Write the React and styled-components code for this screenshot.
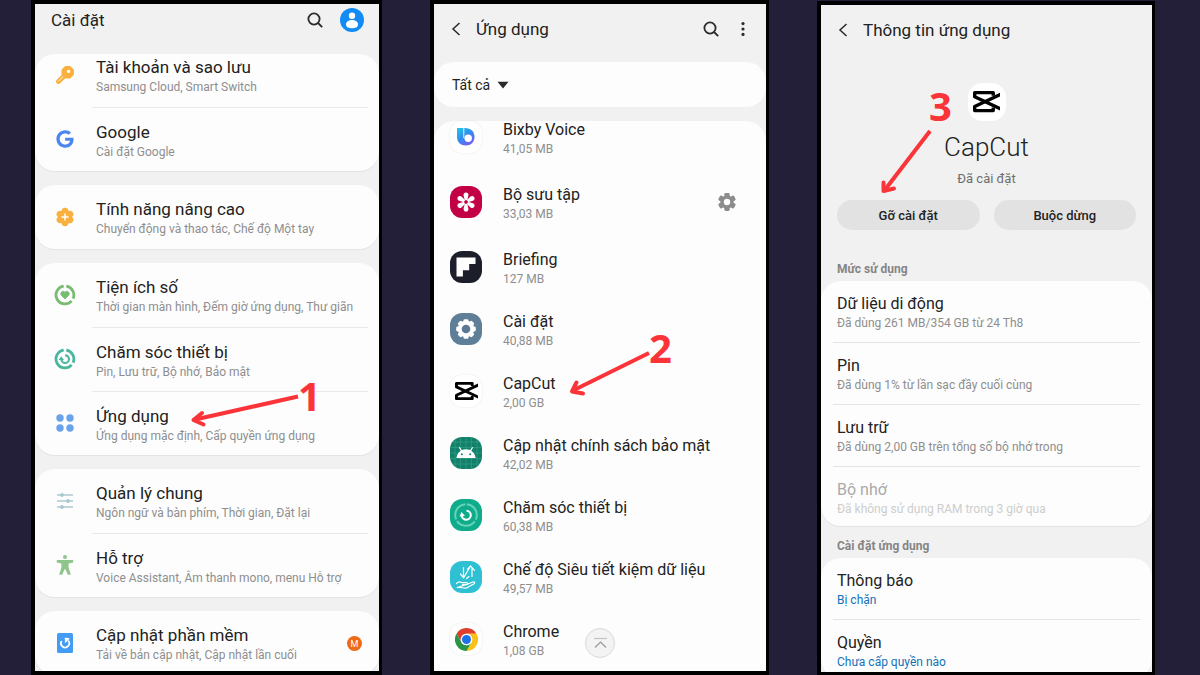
import React from 'react';
import styled, { createGlobalStyle } from 'styled-components';
import { FaGoogle } from 'react-icons/fa';

const GlobalStyle = createGlobalStyle`
    * {
        box-sizing: border-box;
        margin: 0;
        padding: 0;
    }

    body {
        background-color: #241f38;
        color: #222;
        font-family: Roboto, "Noto Sans", sans-serif;
    }

    a {
        color: inherit;
        text-decoration: none;
    }

    ul {
        list-style: none;
    }

    button, select {
        border: none;
        background: none;
        color: inherit;
        font-family: inherit;
        cursor: pointer;
    }

    svg {
        display: block;
        flex-shrink: 0;
    }
`;

const Page = styled.main`
    display: grid;
    grid-template-columns: 351fr 339fr 338fr;
    grid-template-rows: minmax(0, 1fr);
    gap: 48px;
    height: 100vh;
    padding: 0 45px 0 31px;
`;

const Phone = styled.section`
    position: relative;
    display: flex;
    flex-direction: column;
    min-width: 0;
    margin-top: ${({ $drop }) => ($drop ? '1px' : '0')};
    border: 4px solid #000;
    border-right-width: 3px;
    border-bottom-width: ${({ $drop }) => ($drop ? '3px' : '4px')};
    background-color: #f1f1f1;
    overflow: hidden;
`;

const Header = styled.header`
    display: flex;
    align-items: center;
    flex-shrink: 0;
    height: ${({ $compact }) => ($compact ? '50px' : '58px')};
    padding: ${({ $compact }) => ($compact ? '0 15px 18px 16px' : '0 7px 8px 14px')};
`;

const Heading = styled.h1`
    flex: 1;
    font-size: 17px;
    line-height: 24px;
    font-weight: 400;
    white-space: nowrap;
`;

const IconButton = styled.button`
    display: flex;
    align-items: center;
    justify-content: center;
    width: 32px;
    height: 32px;
    flex-shrink: 0;
`;

const BackButton = styled(IconButton)`
    width: 16px;
    margin-right: 12px;
`;

const Avatar = styled.button`
    width: 24px;
    height: 24px;
    margin-left: 9px;
`;

const Card = styled.ul`
    flex-shrink: 0;
    border-radius: 20px;
    background-color: #fdfdfd;
    box-shadow: 0 1px 1px rgba(0, 0, 0, 0.06);
`;

const SettingsGroups = styled.div`
    display: flex;
    flex-direction: column;
    gap: 14px;
`;

const SettingRow = styled.a`
    display: flex;
    align-items: center;
    gap: 15px;
    padding: 0 11px 0 18px;
`;

const IconSlot = styled.span`
    display: flex;
    justify-content: center;
    width: 24px;
    padding-bottom: ${({ $scrolled }) => ($scrolled ? '12px' : '0')};
`;

const SettingBody = styled.span`
    display: flex;
    align-items: center;
    justify-content: space-between;
    flex: 1;
    min-width: 0;
    height: ${({ $scrolled }) => ($scrolled ? '53px' : '64px')};
    padding: ${({ $scrolled }) => ($scrolled ? '0 6px 10px 4px' : '1px 6px 0 4px')};
    border-top: ${({ $divider }) => ($divider ? '1px solid #e9e9e9' : 'none')};
`;

const Texts = styled.span`
    display: flex;
    flex-direction: column;
    white-space: nowrap;
`;

const Title = styled.span`
    font-size: 16px;
    line-height: 22px;
    color: ${({ $disabled }) => ($disabled ? '#a9a9a9' : '#222')};
`;

const SettingTitle = styled(Title)`
    font-size: 17px;
    line-height: 23px;
`;

const Sub = styled.span`
    font-size: 12px;
    line-height: 16px;
    color: ${({ $color }) => $color || '#8e8e8e'};
`;

const Badge = styled.span`
    display: flex;
    align-items: center;
    justify-content: center;
    width: 15px;
    height: 15px;
    border-radius: 50%;
    background-color: #ee6a14;
    color: #fff;
    font-size: 9px;
`;

const FilterBar = styled.div`
    display: flex;
    align-items: center;
    flex-shrink: 0;
    height: 45px;
    margin-bottom: 14px;
    padding-left: 18px;
    border-radius: 20px;
    background-color: #fdfdfd;

    svg {
        margin-left: -18px;
        pointer-events: none;
    }
`;

const Filter = styled.select`
    appearance: none;
    padding-right: 24px;
    font-size: 14px;
    line-height: 22px;
`;

const AppCard = styled(Card)`
    flex: 1 0 0;
    min-height: 0;
    border-radius: 20px 20px 0 0;
`;

const AppScroll = styled.ul`
    margin-top: -15px;
`;

const AppItem = styled.li`
    display: flex;
    align-items: center;
    height: ${({ $tall }) => ($tall ? '68px' : '62px')};
    padding: 0 23px 0 16px;
`;

const AppLink = styled.a`
    display: flex;
    align-items: center;
    gap: 21px;
    flex: 1;

    ${Texts} {
        padding-top: 1px;
    }
`;

const AppIcon = styled.span`
    display: flex;
    align-items: center;
    justify-content: center;
    flex-shrink: 0;
    width: ${({ $size }) => $size || 32}px;
    height: ${({ $size }) => $size || 32}px;
    border-radius: 38%;
    background-color: ${({ $bg }) => $bg || '#fff'};
    box-shadow: ${({ $lifted }) => ($lifted ? '0 0 2px rgba(0, 0, 0, 0.1)' : 'none')};
    overflow: hidden;
`;

const ToTop = styled.button`
    position: absolute;
    left: calc(50% - 15px);
    bottom: 13px;
    display: flex;
    align-items: center;
    justify-content: center;
    width: 30px;
    height: 30px;
    border: 1px solid #d9d9d9;
    border-radius: 50%;
    background-color: #f3f3f3;
`;

const AppSummary = styled.div`
    display: flex;
    flex-direction: column;
    align-items: center;
    flex-shrink: 0;
    padding-top: 20px;
`;

const AppName = styled.h2`
    margin-top: 8px;
    font-size: 26px;
    line-height: 36px;
    font-weight: 300;
`;

const Status = styled.p`
    margin-top: 5px;
    font-size: 13px;
    line-height: 18px;
    color: #6d6d6d;
`;

const Actions = styled.div`
    display: flex;
    flex-shrink: 0;
    gap: 14px;
    padding: 12px 16px 19px;
`;

const Action = styled.button`
    flex: 1;
    height: 30px;
    border-radius: 15px;
    background-color: #e2e2e2;
    font-size: 13px;
    font-weight: 500;
`;

const SectionLabel = styled.h3`
    flex-shrink: 0;
    padding: 12px 16px 4px;
    font-size: 12px;
    line-height: 16px;
    font-weight: 700;
    color: #858585;
`;

const DetailItem = styled.li`
    margin: 0 12px;
    padding: 12px 4px 11px;

    & + & {
        border-top: 1px solid #e4e4e4;
    }

    &:last-child {
        padding-bottom: 9px;
    }
`;

const Arrow = styled.svg`
    position: absolute;
    left: ${({ $left }) => $left}px;
    top: ${({ $top }) => $top}px;
    fill: none;
    stroke: #fa3438;
    stroke-width: 4;
    stroke-linejoin: round;
    pointer-events: none;
`;

const Step = styled.span`
    position: absolute;
    left: ${({ $left }) => $left}px;
    top: ${({ $top }) => $top}px;
    color: #fa3438;
    font-family: "Open Sans", sans-serif;
    font-size: 40px;
    line-height: 40px;
    font-weight: 700;
`;

/* icons */

const SearchIcon = () => (
    <svg width="18" height="18" viewBox="0 0 18 18" fill="none" stroke="#2a2a2a" strokeWidth="1.8">
        <circle cx="8" cy="8" r="5.6" />
        <path d="M12 12l4.2 4.2" />
    </svg>
);

const BackIcon = () => (
    <svg width="10" height="16" viewBox="0 0 10 16" fill="none" stroke="#2a2a2a" strokeWidth="1.5">
        <path d="M8.5 2L2 8l6.5 6" />
    </svg>
);

const MoreIcon = () => (
    <svg width="4" height="16" viewBox="0 0 4 16" fill="#2a2a2a">
        <circle cx="2" cy="2.6" r="1.6" />
        <circle cx="2" cy="8" r="1.6" />
        <circle cx="2" cy="13.4" r="1.6" />
    </svg>
);

const UserIcon = () => (
    <svg width="24" height="24" viewBox="0 0 24 24">
        <circle cx="12" cy="12" r="12" fill="#128bf5" />
        <circle cx="12" cy="7.8" r="3.2" fill="#fff" />
        <path d="M6 16.4c0-2.7 2.8-4.4 6-4.4s6 1.7 6 4.4-2.8 3.8-6 3.8-6-1.1-6-3.8z" fill="#fff" />
    </svg>
);

const KeyIcon = () => (
    <svg width="18" height="18" viewBox="0 0 18 18">
        <path d="M9 9L2.500 15.500" stroke="#f9b03f" strokeWidth="4.800" strokeLinecap="round" />
        <path d="M8.400 9.200L2.500 15.100" stroke="#fdfdfd" strokeWidth="0.900" strokeLinecap="round" />
        <path d="M9.400.8h4.600l3.200 3.200v4.600l-3.200 3.200H9.400L6.200 8.600V4z" fill="#f9b03f" stroke="#f9b03f" strokeWidth="1.400" strokeLinejoin="round" />
        <circle cx="12.600" cy="5.400" r="1.700" fill="#fff" />
    </svg>
);

const FlowerPlusIcon = () => (
    <svg width="20" height="20" viewBox="-10 -10 20 20">
        <g fill="#f9b03f">
            <circle r="7.400" />
            {[0, 60, 120, 180, 240, 300].map(a => (
                <circle key={a} cx="0" cy="-6" r="3.200" transform={`rotate(${a})`} />
            ))}
        </g>
        <path d="M0-3.600V3.600M-3.600 0H3.600" stroke="#fff" strokeWidth="1.5" />
    </svg>
);

const Ring = ({ color }) => (
    <g fill="none" stroke={color} strokeWidth="2.800">
        <path d="M-1.300-8.800A8.900 8.900 0 1 0 6.600 5.900" />
        <path d="M1.300-8.800A8.900 8.900 0 0 1 8.100 3.600" />
    </g>
);

const HeartRingIcon = () => (
    <svg width="22" height="22" viewBox="-11 -11 22 22">
        <Ring color="#79bb70" />
        <path d="M0 3.800L-3.700.2A2.200 2.200 0 0 1 0-2.600A2.200 2.200 0 0 1 3.700.2z" fill="#79bb70" stroke="#79bb70" strokeWidth="1" strokeLinejoin="round" />
    </svg>
);

const CareIcon = () => (
    <svg width="22" height="22" viewBox="-11 -11 22 22">
        <Ring color="#49b79d" />
        <path d="M.2-3.600A3.800 3.800 0 1 1-3.600.5" fill="none" stroke="#49b79d" strokeWidth="2.100" />
        <path d="M-6.400 1L-3.800-2.800L-1 1z" fill="#49b79d" />
    </svg>
);

const DotsIcon = () => (
    <svg width="18" height="18" viewBox="0 0 18 18" fill="#6ba3ea">
        <circle cx="4" cy="4" r="3.700" />
        <circle cx="14" cy="4" r="3.700" />
        <circle cx="4" cy="14" r="3.700" />
        <circle cx="14" cy="14" r="3.700" />
    </svg>
);

const SlidersIcon = () => (
    <svg width="18" height="20" viewBox="0 0 18 20" stroke="#abc9d1" fill="#abc9d1">
        <path d="M1 4h16M1 10h16M1 16h16" strokeWidth="1.300" />
        <circle cx="6" cy="4" r="1.500" />
        <circle cx="12" cy="10" r="1.500" />
        <circle cx="6" cy="16" r="1.500" />
    </svg>
);

const PersonIcon = () => (
    <svg width="18" height="22" viewBox="0 0 18 22" fill="#8fc48b">
        <circle cx="9" cy="3" r="2" />
        <path d="M.8 6h16.400v2.400L12.600 9.600v4l2.200 7.200h-3L9.600 15.500H8.400l-2.200 5.300h-3L5.400 13.600v-4L.8 8.400z" />
    </svg>
);

const UpdateIcon = () => (
    <svg width="16" height="20" viewBox="0 0 16 20">
        <rect width="16" height="20" rx="1.500" fill="#439cf3" />
        <path d="M11.200 7.600A4.100 4.100 0 1 1 4.700 8" fill="none" stroke="#fff" strokeWidth="1.700" />
        <path d="M7.600 5.600h4.800M8.400 5v4.600l3.600-3.800z" fill="#fff" stroke="#fff" strokeWidth="0.800" />
    </svg>
);

const GearShape = ({ teeth, r, tooth, width, hole, fill, holeFill }) => (
    <g>
        <g fill={fill}>
            <circle r={r} />
            {Array.from({ length: teeth }, (_, i) => (
                <rect
                    key={i}
                    x={-width / 2}
                    y={-tooth}
                    width={width}
                    height={tooth}
                    rx="1.4"
                    transform={`rotate(${(360 / teeth) * i})`}
                />
            ))}
        </g>
        <circle r={hole} fill={holeFill} />
    </g>
);

const CapCutIcon = ({ width }) => (
    <svg width={width} viewBox="0 0 80 63" fill="none" stroke="#000" strokeWidth="10" strokeLinejoin="round">
        <path d="M60 14V5H5v12l83 39" />
        <path d="M60 49v9H5V46L88 7" />
    </svg>
);

const BixbyIcon = () => (
    <svg width="20" height="20" viewBox="0 0 20 20">
        <defs>
            <linearGradient id="bixby" x1="0" y1="0" x2="0.7" y2="1">
                <stop offset="0" stopColor="#22c8e6" />
                <stop offset="0.5" stopColor="#2f8ff2" />
                <stop offset="1" stopColor="#7b5cf0" />
            </linearGradient>
        </defs>
        <path d="M1 1h8c6 0 9.500 3.800 9.500 9 0 5-3.700 8.500-8.700 8.500S1 15 1 10z" fill="url(#bixby)" />
        <path d="M7.800.5v10.500" fill="none" stroke="#fff" strokeWidth="0.900" />
        <circle cx="12.200" cy="11.200" r="3.700" fill="#fff" />
    </svg>
);

const GalleryIcon = () => (
    <svg width="22" height="22" viewBox="-11 -11 22 22">
        {[0, 60, 120, 180, 240, 300].map(a => (
            <path key={a} d="M-1.200-1.500L-2.400-6.600A2.450 2.450 0 1 1 2.400-6.600L1.200-1.500z" fill="#fff" transform={`rotate(${a})`} />
        ))}
        <circle r="1.700" fill="#c30046" />
    </svg>
);

const FlipIcon = () => (
    <svg width="20" height="20" viewBox="0 0 20 20" fill="#fff">
        <path d="M.5.5h19v6.400h-6.300v6.300H6.900v6.300H.5z" />
    </svg>
);

const SettingsAppIcon = () => (
    <svg width="22" height="22" viewBox="-11 -11 22 22">
        <GearShape teeth={8} r={8.2} tooth={9.8} width={5} hole={4.3} fill="#fff" holeFill="#5d7a92" />
    </svg>
);

const AndroidIcon = () => (
    <svg width="32" height="32" viewBox="0 0 32 32">
        <path d="M5 0v32M10.500 0v32M16 0v32M21.500 0v32M27 0v32M0 5h32M0 10.500h32M0 16h32M0 21.500h32M0 27h32" stroke="#3fa98f" strokeWidth="0.500" />
        <path d="M6.400 21c.4-3.700 2.300-6 4.400-7.300L8.800 10.500l1-.6 2 3.200c2.600-1 5.800-1 8.400 0l2-3.200 1 .6-2 3.200c2.100 1.300 4 3.600 4.400 7.300z" fill="#fff" />
        <circle cx="11.800" cy="17.300" r="1" fill="#12806a" />
        <circle cx="20.200" cy="17.300" r="1" fill="#12806a" />
    </svg>
);

const CareAppIcon = () => (
    <svg width="32" height="32" viewBox="-16 -16 32 32">
        <circle r="10.800" fill="none" stroke="#68d3b9" strokeWidth="2" strokeDasharray="20.600 2 20.600 2 20.600 2" transform="rotate(-85)" />
        <path d="M.5-4.300A4.500 4.500 0 1 1-4.200.4" fill="none" stroke="#fff" strokeWidth="2.100" />
        <path d="M-6.500 1.600L-4.600-3L-1 .8z" fill="#fff" />
    </svg>
);

const DataSaverIcon = () => (
    <svg width="32" height="32" viewBox="0 0 32 32" fill="none" stroke="#fff" strokeWidth="1.200" strokeLinejoin="round" strokeLinecap="round">
        <path d="M13.500 6.500V16M10.500 13l3.200 3.800L19.800 6.200M17.500 8.400L20.500 5l4 4.400M22 7v8.500M19 15.500l-2.500 2" />
        <path d="M6.500 22.500c1.500-1.700 3.500-2.200 5.500-.8h4.500c1.500 0 1.500 2 0 2h-4M16.500 23.500l6.300-2.500c2-.7 2.500.8 1.200 1.700l-7 4c-2 1.200-6-.8-9.800-.2z" />
    </svg>
);

const ChromeIcon = () => {
    const sector = 'M-9.530-5.500A11 11 0 0 1 9.530-5.500H0A5.500 5.500 0 0 0-4.760 2.750Z';
    return (
        <svg width="23" height="23" viewBox="-11 -11 22 22">
            <path d={sector} fill="#e03e2f" />
            <path d={sector} fill="#fbc116" transform="rotate(120)" />
            <path d={sector} fill="#2a9447" transform="rotate(240)" />
            <circle r="5.500" fill="#fff" />
            <circle r="4.300" fill="#1a73e8" />
        </svg>
    );
};

/* data */

const settingsGroups = [
    [
        { icon: <KeyIcon />, title: 'Tài khoản và sao lưu', sub: 'Samsung Cloud, Smart Switch', scrolled: true },
        { icon: <FaGoogle size={18} color="#4a86ee" />, title: 'Google', sub: 'Cài đặt Google' },
    ],
    [{ icon: <FlowerPlusIcon />, title: 'Tính năng nâng cao', sub: 'Chuyển động và thao tác, Chế độ Một tay' }],
    [
        { icon: <HeartRingIcon />, title: 'Tiện ích số', sub: 'Thời gian màn hình, Đếm giờ ứng dụng, Thư giãn' },
        { icon: <CareIcon />, title: 'Chăm sóc thiết bị', sub: 'Pin, Lưu trữ, Bộ nhớ, Bảo mật' },
        { icon: <DotsIcon />, title: 'Ứng dụng', sub: 'Ứng dụng mặc định, Cấp quyền ứng dụng' },
    ],
    [
        { icon: <SlidersIcon />, title: 'Quản lý chung', sub: 'Ngôn ngữ và bàn phím, Thời gian, Đặt lại' },
        { icon: <PersonIcon />, title: 'Hỗ trợ', sub: 'Voice Assistant, Âm thanh mono, menu Hỗ trợ' },
    ],
    [{ icon: <UpdateIcon />, title: 'Cập nhật phần mềm', sub: 'Tải về bản cập nhật, Cập nhật lần cuối', badge: 'M' }],
];

const apps = [
    { icon: <BixbyIcon />, lifted: true, name: 'Bixby Voice', size: '41,05 MB' },
    { icon: <GalleryIcon />, bg: '#c30046', name: 'Bộ sưu tập', size: '33,03 MB', gear: true },
    { icon: <FlipIcon />, bg: '#1c1e29', name: 'Briefing', size: '127 MB' },
    { icon: <SettingsAppIcon />, bg: '#5f7f99', name: 'Cài đặt', size: '40,88 MB' },
    { icon: <CapCutIcon width={23} />, lifted: true, name: 'CapCut', size: '2,00 GB' },
    { icon: <AndroidIcon />, bg: '#12806a', name: 'Cập nhật chính sách bảo mật', size: '42,02 MB' },
    { icon: <CareAppIcon />, bg: '#0fac8c', name: 'Chăm sóc thiết bị', size: '60,38 MB' },
    { icon: <DataSaverIcon />, bg: '#2fc0d4', name: 'Chế độ Siêu tiết kiệm dữ liệu', size: '49,57 MB' },
    { icon: <ChromeIcon />, lifted: true, name: 'Chrome', size: '1,08 GB' },
];

const usage = [
    { title: 'Dữ liệu di động', sub: 'Đã dùng 261 MB/354 GB từ 24 Th8' },
    { title: 'Pin', sub: 'Đã dùng 1% từ lần sạc đầy cuối cùng' },
    { title: 'Lưu trữ', sub: 'Đã dùng 2,00 GB trên tổng số bộ nhớ trong' },
    { title: 'Bộ nhớ', sub: 'Đã không sử dụng RAM trong 3 giờ qua', disabled: true },
];

const appSettings = [
    { title: 'Thông báo', sub: 'Bị chặn', color: '#1272b8' },
    { title: 'Quyền', sub: 'Chưa cấp quyền nào', color: '#1272b8' },
];

const DetailList = ({ items }) => (
    <Card>
        {items.map(({ title, sub, color, disabled }) => (
            <DetailItem key={title}>
                <a href={disabled ? undefined : '#'}>
                    <Texts>
                        <Title $disabled={disabled}>{title}</Title>
                        <Sub $color={disabled ? '#cdcdcd' : color}>{sub}</Sub>
                    </Texts>
                </a>
            </DetailItem>
        ))}
    </Card>
);

const SettingsScreen = () => (
    <Phone>
        <Header $compact>
            <Heading>Cài đặt</Heading>
            <IconButton aria-label="Tìm kiếm"><SearchIcon /></IconButton>
            <Avatar aria-label="Tài khoản"><UserIcon /></Avatar>
        </Header>
        <SettingsGroups>
            {settingsGroups.map(group => (
                <Card key={group[0].title}>
                    {group.map(({ icon, title, sub, badge, scrolled }, i) => (
                        <li key={title}>
                            <SettingRow href="#">
                                <IconSlot $scrolled={scrolled}>{icon}</IconSlot>
                                <SettingBody $divider={i > 0} $scrolled={scrolled}>
                                    <Texts>
                                        <SettingTitle>{title}</SettingTitle>
                                        <Sub>{sub}</Sub>
                                    </Texts>
                                    {badge && <Badge>{badge}</Badge>}
                                </SettingBody>
                            </SettingRow>
                        </li>
                    ))}
                </Card>
            ))}
        </SettingsGroups>
        <Arrow $left={153} $top={386} width="114" height="40">
            <path d="M110 6.500L5 30" />
            <path d="M14 23L5.500 30l10 4.500" strokeLinecap="round" />
        </Arrow>
        <Step $left={263} $top={372}>1</Step>
    </Phone>
);

const AppsScreen = () => (
    <Phone>
        <Header>
            <BackButton aria-label="Quay lại"><BackIcon /></BackButton>
            <Heading>Ứng dụng</Heading>
            <IconButton aria-label="Tìm kiếm"><SearchIcon /></IconButton>
            <IconButton aria-label="Thêm"><MoreIcon /></IconButton>
        </Header>
        <FilterBar>
            <Filter aria-label="Lọc ứng dụng" defaultValue="all">
                <option value="all">Tất cả</option>
            </Filter>
            <svg width="12" height="8" viewBox="0 0 12 8"><path d="M.5.8h11L6 7.500z" fill="#2a2a2a" /></svg>
        </FilterBar>
        <AppCard as="div">
            <AppScroll>
                {apps.map(({ icon, bg, lifted, name, size, gear }) => (
                    <AppItem key={name} $tall={gear}>
                        <AppLink href="#">
                            <AppIcon $bg={bg} $lifted={lifted}>{icon}</AppIcon>
                            <Texts>
                                <Title>{name}</Title>
                                <Sub>{size}</Sub>
                            </Texts>
                        </AppLink>
                        {gear && (
                            <IconButton aria-label="Cài đặt Bộ sưu tập">
                                <svg width="20" height="20" viewBox="-10 -10 20 20">
                                    <GearShape teeth={6} r={6.6} tooth={9} width={5.4} hole={3.2} fill="#8c8c8c" holeFill="#fdfdfd" />
                                </svg>
                            </IconButton>
                        )}
                    </AppItem>
                ))}
            </AppScroll>
        </AppCard>
        <ToTop aria-label="Lên đầu trang">
            <svg width="15" height="12" viewBox="0 0 15 12" fill="none" stroke="#999" strokeWidth="1.200">
                <path d="M1 1.500h13" stroke="#c4c4c4" />
                <path d="M2 10.500l5.500-5.500 5.500 5.500" />
            </svg>
        </ToTop>
        <Arrow $left={134} $top={344} width="84" height="52">
            <path d="M81 5L4 43" />
            <path d="M8.500 34.500L4 43.500l11 2" strokeLinecap="round" />
        </Arrow>
        <Step $left={215} $top={324}>2</Step>
    </Phone>
);

const AppInfoScreen = () => (
    <Phone $drop>
        <Header>
            <BackButton aria-label="Quay lại"><BackIcon /></BackButton>
            <Heading>Thông tin ứng dụng</Heading>
        </Header>
        <AppSummary>
            <AppIcon $size={38}><CapCutIcon width={27} /></AppIcon>
            <AppName>CapCut</AppName>
            <Status>Đã cài đặt</Status>
        </AppSummary>
        <Actions>
            <Action>Gỡ cài đặt</Action>
            <Action>Buộc dừng</Action>
        </Actions>
        <SectionLabel>Mức sử dụng</SectionLabel>
        <DetailList items={usage} />
        <SectionLabel>Cài đặt ứng dụng</SectionLabel>
        <DetailList items={appSettings} />
        <Arrow $left={58} $top={122} width="56" height="70">
            <path d="M51 4L5 64" />
            <path d="M4.500 55.500V64l10.500-2.500" strokeLinecap="round" />
        </Arrow>
        <Step $left={108} $top={81}>3</Step>
    </Phone>
);

const App = () => {
    return (
        <>
            <GlobalStyle />
            <Page>
                <SettingsScreen />
                <AppsScreen />
                <AppInfoScreen />
            </Page>
        </>
    )
}

export default App
